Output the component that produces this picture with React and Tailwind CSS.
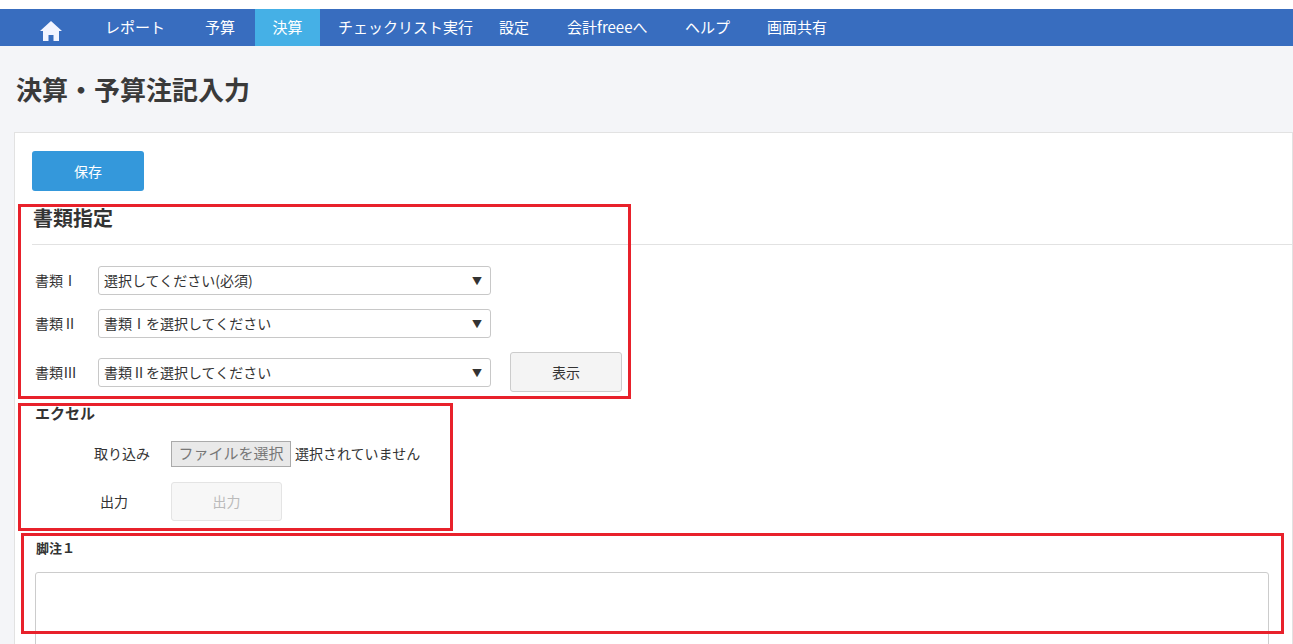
import React from "react";

const F = { fontFamily: '"Noto Sans CJK JP", "Liberation Sans", sans-serif' };

function Sel({ text }) {
  return (
    <div className="w-[393px] h-[29px] border border-[#c8c8c8] rounded-[3px] bg-white flex items-center justify-between pl-[5px] pr-[8px] text-[14px] text-[#333]">
      <span>{text}</span>
      <span className="text-[10px]">▼</span>
    </div>
  );
}

export default function App() {
  return (
    <div style={F} className="relative w-[1293px] h-[644px] overflow-hidden bg-[#f4f5f8] text-[#333]">
      <div className="h-[9px] bg-white" />
      <div className="h-[37px] bg-[#386dbf] flex items-center text-white text-[15px]">
        <div className="w-[105px] flex justify-center pt-[6px] pr-[4px]">
          <svg width="24" height="22" viewBox="0 0 24 22"><path d="M12 1 L1 11 H4 V21 H9.5 V15 H14.5 V21 H20 V11 H23 Z" fill="#f2f4ff"/></svg>
        </div>
        <div className="w-[100px]">レポート</div>
        <div className="w-[50px]">予算</div>
        <div className="h-full w-[65px] bg-[#45b0e6] flex items-center justify-center">決算</div>
        <div className="w-[179px] pl-[18px]">チェックリスト実行</div>
        <div className="w-[68px]">設定</div>
        <div className="w-[118px]">会計freeeへ</div>
        <div className="w-[82px]">ヘルプ</div>
        <div>画面共有</div>
      </div>
      <div className="px-[16px] pt-[23px] h-[86px] text-[26px] font-bold text-[#3a3a3a]">決算・予算注記入力</div>
      <div className="ml-[14px] bg-white border border-[#e2e2e2] h-[600px] pl-[17px] pt-[18px]">
        <button className="w-[112px] h-[40px] rounded-[3px] bg-[#3498db] text-white text-[14px]">保存</button>
        <div className="mt-[12px] text-[20px] font-bold pl-[1px]">書類指定</div>
        <div className="mt-[11px] border-t border-[#e2e2e2]" />
        <div className="mt-[21px] pl-[3px] flex flex-col text-[14px]">
          <div className="flex items-center h-[29px]"><span className="w-[63px]">書類Ⅰ</span><Sel text="選択してください(必須)" /></div>
          <div className="flex items-center h-[29px] mt-[14px]"><span className="w-[63px]">書類Ⅱ</span><Sel text="書類Ⅰを選択してください" /></div>
          <div className="flex items-center h-[40px] mt-[14px]"><span className="w-[63px]">書類Ⅲ</span><Sel text="書類Ⅱを選択してください" />
            <button className="ml-[19px] w-[112px] h-[40px] border border-[#ccc] rounded-[3px] bg-[#f4f4f4] text-[14px]">表示</button>
          </div>
        </div>
        <div className="mt-[10px] pl-[3px] text-[15px] font-bold">エクセル</div>
        <div className="mt-[16px] flex items-center text-[14px] h-[26px]">
          <span className="w-[139px] pl-[62px]">取り込み</span>
          <span className="h-[26px] w-[120px] border border-[#aaa] bg-[#e9e9e9] text-[#777] flex items-center justify-center text-[15px]">ファイルを選択</span>
          <span className="ml-[4px]">選択されていません</span>
        </div>
        <div className="mt-[15px] flex items-center text-[14px] h-[39px]">
          <span className="w-[139px] pl-[68px]">出力</span>
          <span className="h-[39px] w-[111px] border border-[#e4e4e4] rounded-[3px] bg-[#f7f7f7] text-[#bbb] flex items-center justify-center">出力</span>
        </div>
        <div className="mt-[17px] pl-[4px] text-[13px] font-bold">脚注１</div>
        <div className="mt-[15px] ml-[3px] w-[1234px] h-[80px] border border-[#ccc] rounded-[3px]" />
      </div>
      <div className="absolute left-[18px] top-[204px] w-[613px] h-[195px] border-[3px] border-[#e8212b]" />
      <div className="absolute left-[18px] top-[403px] w-[435px] h-[128px] border-[3px] border-[#e8212b]" />
      <div className="absolute left-[21px] top-[533px] w-[1263px] h-[101px] border-[3px] border-[#e8212b]" />
    </div>
  );
}
